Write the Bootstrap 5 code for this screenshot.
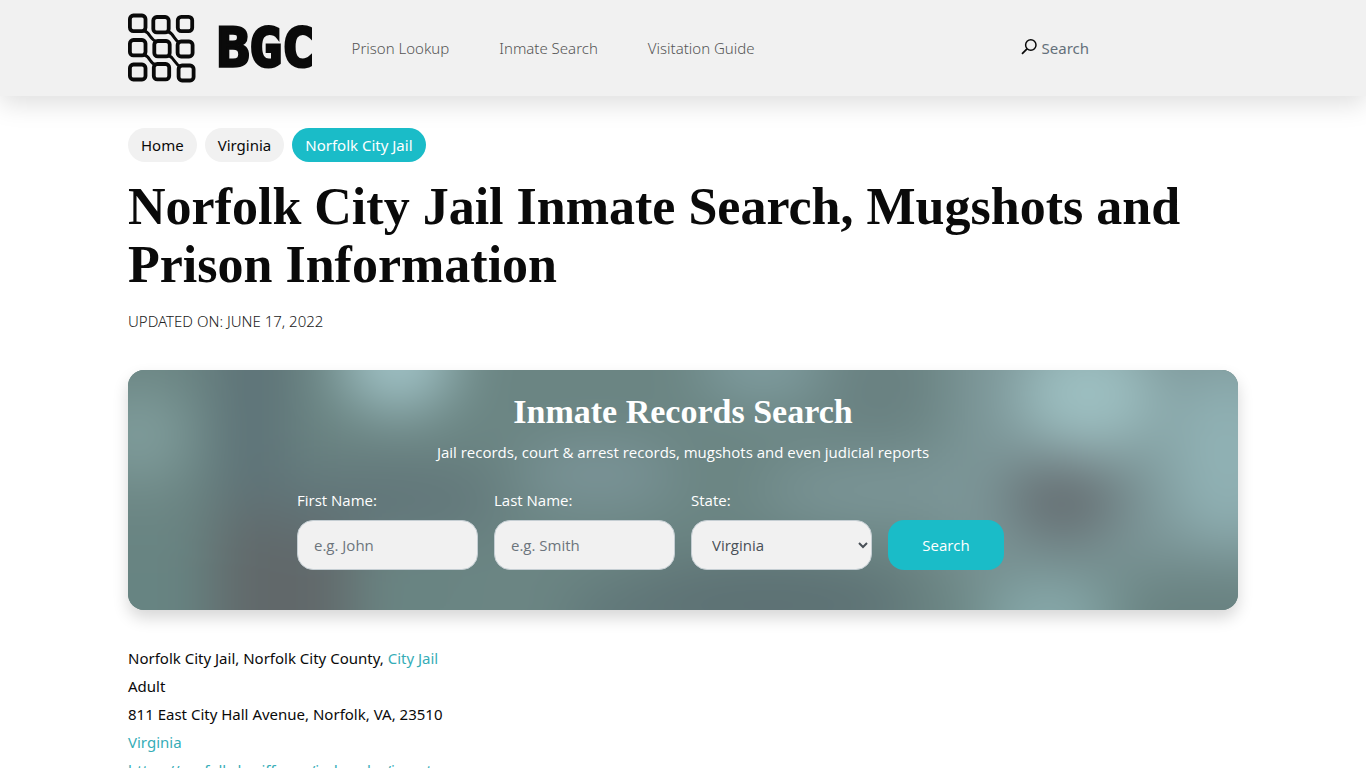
<!DOCTYPE html>
<html lang="en">
<head>
<meta charset="utf-8">
<meta name="viewport" content="width=device-width, initial-scale=1">
<title>Norfolk City Jail Inmate Search, Mugshots and Prison Information</title>
<link href="https://cdn.jsdelivr.net/npm/bootstrap@5.3.0/dist/css/bootstrap.min.css" rel="stylesheet">
<style>
:root { --teal: #1abcc8; --pale: #f1f1f1; --ink: #0a0a0a; }
body { font-family: "Noto Sans", "Open Sans", sans-serif; font-size: 15px; line-height: 28px; color: var(--ink); overflow-x: hidden; }
.site-header { background: var(--pale); min-height: 96px; box-shadow: 0 8px 24px rgba(0,0,0,.13); }
.page-wrap { max-width: 1142px; padding: 0 16px; }
.brand-link { gap: 21px; margin-right: 37px; }
.wordmark { font: bold 54px/64px "DejaVu Sans Mono", monospace; color: var(--ink); -webkit-text-stroke: 3px var(--ink); }
.main-nav { gap: 50px; font-weight: 300; }
.main-nav .nav-link { color: #555; padding: 0; }
.find-link { color: #64707a; margin-right: 149px; }
.crumb { background: var(--pale); color: var(--ink); border-radius: 17px; padding: 3px 13px; }
.crumb.active { background: var(--teal); color: #fff; }
h1, h2 { font-family: "Liberation Serif", serif; font-weight: 700; }
h1 { font-size: 52px; line-height: 58px; margin: 16px 0 13px; }
.updated { font-weight: 300; color: #222; margin-bottom: 35px; }
.finder {
  border-radius: 16px; color: #fff; padding: 24px 16px 40px;
  font-family: "Open Sans", "Noto Sans", sans-serif;
  box-shadow: 0 8px 16px rgba(0,0,0,.16);
}
.finder-backdrop { position: absolute; inset: 0; width: 100%; height: 100%; border-radius: 16px; }
.finder h2 { font-size: 34px; line-height: 36px; margin-bottom: 8px; }
.finder-fields { gap: 16px; margin-top: 20px; padding-right: 65px; }
.finder-fields > div { width: 181px; }
.finder-fields label { display: block; margin-bottom: 6px; }
.field { height: 50px; width: 100%; border: 1px solid #c5ced3; border-radius: 16px; background: var(--pale); color: #495057; padding: 0 16px; font-size: 15px; }
select.field { padding: 0 0 0 16px; }
.field::placeholder { color: #6c757d; opacity: 1; }
.btn-find { height: 50px; width: 116px; border-radius: 16px; background: var(--teal); color: #fff; font-size: 15px; }
.details { margin-top: 34px; }
.details a { color: #36adb7; text-decoration: none; }
</style>
</head>
<body>
<header class="site-header d-flex align-items-center position-relative">
  <div class="container-fluid page-wrap d-flex align-items-center">
    <a href="#" class="brand-link d-flex align-items-center text-decoration-none" aria-label="BGC home">
      <svg width="68" height="70" viewBox="0 0 68 70" fill="none" stroke="#0a0a0a" stroke-width="3.800">
        <rect x="1.900" y="2.500" width="15.600" height="15.600" rx="3.500"/><rect x="25.300" y="4" width="15.400" height="15.400" rx="3.500"/><rect x="49.800" y="3.800" width="14.400" height="14.400" rx="3.500"/>
        <rect x="1.900" y="27" width="15.600" height="15.400" rx="3.500"/><rect x="26.300" y="28" width="15.400" height="15.400" rx="3.500"/><rect x="49.600" y="28.500" width="15" height="15" rx="3.500"/>
        <rect x="1.900" y="51.500" width="15.600" height="15" rx="3.500"/><rect x="25.800" y="51" width="15.400" height="15.400" rx="3.500"/><rect x="50.600" y="52.500" width="15" height="15" rx="3.500"/>
        <path stroke-width="3" d="M15 17c8 3 6 9 14 12M39 18c8 3 6 9 13 12M15 41c8 3 6 9 13 11M40 42c7 3 6 9 13 12"/>
      </svg>
      <span class="wordmark">BGC</span>
    </a>
    <nav class="nav main-nav">
      <a class="nav-link" href="#">Prison Lookup</a>
      <a class="nav-link" href="#">Inmate Search</a>
      <a class="nav-link" href="#">Visitation Guide</a>
    </nav>
    <a href="#" class="find-link ms-auto text-decoration-none d-flex align-items-center gap-1">
      <svg width="17" height="18" viewBox="0 0 17 18" fill="none" stroke="#0a0a0a" stroke-width="1.500"><circle cx="9.800" cy="6" r="5.200"/><path d="M6 9.800 1 14.800" stroke-width="1.800"/></svg>
      Search
    </a>
  </div>
</header>
<main class="container-fluid page-wrap">
  <nav class="d-flex gap-2 mt-3 pt-3" aria-label="Breadcrumb">
    <a class="crumb text-decoration-none" href="#">Home</a>
    <a class="crumb text-decoration-none" href="#">Virginia</a>
    <a class="crumb active text-decoration-none" href="#" aria-current="page">Norfolk City Jail</a>
  </nav>
  <h1>Norfolk City Jail Inmate Search, Mugshots and Prison Information</h1>
  <p class="updated text-uppercase">Updated on: June 17, 2022</p>
  <section class="finder position-relative text-center">
    <svg class="finder-backdrop" viewBox="0 0 1110 240" preserveAspectRatio="none" aria-hidden="true">
      <defs><filter id="soft" filterUnits="userSpaceOnUse" x="-150" y="-150" width="1410" height="540" color-interpolation-filters="sRGB"><feGaussianBlur stdDeviation="29"/></filter></defs>
      <rect width="1110" height="240" fill="#6b8583"/>
      <g filter="url(#soft)">
        <rect x="-150" y="-150" width="1410" height="540" fill="#6b8583"/>
        <rect x="-100" y="170" width="180" height="200" fill="#678482"/>
        <rect x="820" y="-100" width="400" height="300" fill="#7d9799"/>
        <rect x="90" y="-80" width="70" height="260" fill="#5d7277"/>
        <rect x="85" y="125" width="140" height="200" rx="50" fill="#61686a"/>
        <ellipse cx="250" cy="130" rx="130" ry="35" fill="#617579"/>
        <ellipse cx="10" cy="65" rx="55" ry="45" fill="#809d9c"/>
        <ellipse cx="270" cy="-8" rx="58" ry="48" fill="#a2c4c8"/>
        <ellipse cx="470" cy="105" rx="80" ry="24" fill="#80999f"/>
        <ellipse cx="635" cy="-5" rx="65" ry="30" fill="#84a2a6"/>
        <ellipse cx="750" cy="20" rx="55" ry="40" fill="#698081"/>
        <ellipse cx="780" cy="120" rx="150" ry="35" fill="#7c9698"/>
        <ellipse cx="480" cy="250" rx="40" ry="30" fill="#5d7376"/>
        <ellipse cx="640" cy="235" rx="150" ry="45" fill="#5c7073"/>
        <ellipse cx="300" cy="230" rx="35" ry="25" fill="#678482"/>
        <ellipse cx="960" cy="25" rx="70" ry="60" fill="#9dbfc1"/>
        <ellipse cx="1100" cy="85" rx="60" ry="90" fill="#90b1b4"/>
        <ellipse cx="935" cy="130" rx="58" ry="40" fill="#646c70"/>
        <ellipse cx="920" cy="250" rx="70" ry="35" fill="#8cafb1"/>
        <ellipse cx="1080" cy="240" rx="80" ry="45" fill="#688180"/>
      </g>
    </svg>
    <div class="position-relative">
      <h2>Inmate Records Search</h2>
      <p class="mb-0">Jail records, court &amp; arrest records, mugshots and even judicial reports</p>
      <form class="finder-fields d-flex flex-wrap justify-content-center align-items-end text-start">
        <div><label for="first">First Name:</label><input class="field" id="first" type="text" placeholder="e.g. John"></div>
        <div><label for="last">Last Name:</label><input class="field" id="last" type="text" placeholder="e.g. Smith"></div>
        <div><label for="state">State:</label><select class="field" id="state"><option>Virginia</option></select></div>
        <button class="btn btn-find" type="button">Search</button>
      </form>
    </div>
  </section>
  <section class="details">
    <div>Norfolk City Jail, Norfolk City County, <a href="#">City Jail</a></div>
    <div>Adult</div>
    <div>811 East City Hall Avenue, Norfolk, VA, 23510</div>
    <div><a href="#">Virginia</a></div>
    <div><a href="#">https://norfolksheriff.com/index.php/inmate</a></div>
  </section>
</main>
<script src="https://cdn.jsdelivr.net/npm/bootstrap@5.3.0/dist/js/bootstrap.bundle.min.js"></script>
</body>
</html>
